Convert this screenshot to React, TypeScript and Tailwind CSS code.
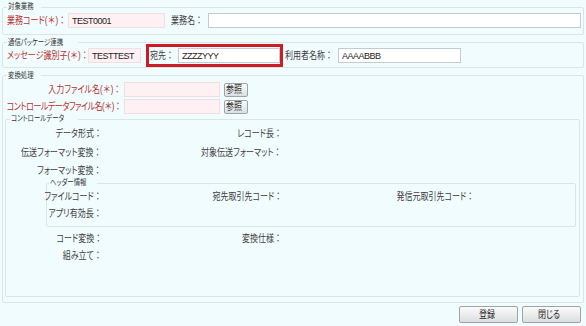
import React from 'react';

type BoxProps = {
  value?: string;
  width: string;
  required?: boolean;
};

function TextBox({ value = '', width, required = false }: BoxProps) {
  return (
    <input
      type="text"
      readOnly
      value={value}
      className={`${width} h-[15px] px-[3px] text-[9px] text-[#1e1e1e] tracking-[-0.5px] outline-none border ${
        required ? 'bg-[#fff0f3] border-[#f2dde1]' : 'bg-white border-[#c3cbcf]'
      }`}
    />
  );
}

// condensed label text, like the narrow UI font of the original screen.
// ＊ and ： keep their full width.
function Txt({ text, right = false, tight = false }: { text: string; right?: boolean; tight?: boolean }) {
  const parts = text.split(/([＊：])/);
  return (
    <span
      className={`inline-block shrink-0 whitespace-nowrap scale-x-[0.8] ${right ? 'origin-right' : 'origin-left'} ${
        tight ? 'tracking-[-0.6px]' : ''
      }`}
    >
      {parts.map((p, i) =>
        p === '＊' || p === '：' ? (
          <span key={i} className="[font-feature-settings:normal]">
            {p}
          </span>
        ) : (
          p
        )
      )}
    </span>
  );
}

function SmallButton({ label, width, height }: { label: string; width: string; height: string }) {
  return (
    <button
      type="button"
      className={`${width} ${height} flex items-center justify-center rounded-[2px] border border-[#9ea3a6] bg-gradient-to-b from-[#fbfbfb] to-[#dcdedf] text-[10px] text-[#2a2a2a] leading-none`}
    >
      <Txt text={label} />
    </button>
  );
}

function Legend({ text, className = '' }: { text: string; className?: string }) {
  return (
    <legend className={`px-[1px] text-[8px] text-[#333] ${className}`}>
      <Txt text={text} />
    </legend>
  );
}

function Cell({ text, width }: { text?: string; width: string }) {
  return <div className={`${width} flex justify-end`}>{text && <Txt text={text} right />}</div>;
}

export default function App() {
  return (
    <div className="w-[586px] h-[326px] overflow-hidden bg-[#f0fcfe] px-[2px] pt-[1px] text-[10px] text-[#404040] font-['Liberation_Sans','Noto_Sans_CJK_JP',sans-serif] [font-feature-settings:'palt']">
      {/* 対象業務 */}
      <fieldset className="border border-[#dbe4e7] rounded-[2px] pl-[4px] pr-[2px] pb-[6px]">
        <Legend text="対象業務" className="leading-[12px]" />
        <div className="flex items-center h-[15px]">
          <div className="w-[61px] text-[#b8312f]">
            <Txt text="業務コード(＊)：" />
          </div>
          <TextBox value="TEST0001" width="w-[97px]" required />
          <div className="ml-[6px] w-[37px]">
            <Txt text="業務名：" />
          </div>
          <div className="flex-1 flex">
            <TextBox width="w-full" />
          </div>
        </div>
      </fieldset>

      {/* 通信パッケージ連携 */}
      <fieldset className="mt-[2px] border border-[#dbe4e7] rounded-[2px] pl-[4px] pr-[2px] pb-[4px]">
        <Legend text="通信パッケージ連携" className="leading-[11px]" />
        <div className="flex items-center h-[15px]">
          <div className="w-[81px] text-[#b8312f]">
            <Txt text="メッセージ識別子(＊)：" />
          </div>
          <TextBox value="TESTTEST" width="w-[53px]" required />
          <div className="ml-[5px] h-[23px] w-[137px] flex items-center border-[3px] border-[#cc1c26]">
            <div className="pl-[1px] w-[29px]">
              <Txt text="宛先：" />
            </div>
            <TextBox value="ZZZZYYY" width="w-[102px]" />
          </div>
          <div className="ml-[2px] w-[53px]">
            <Txt text="利用者名称：" />
          </div>
          <TextBox value="AAAABBB" width="w-[123px]" />
        </div>
      </fieldset>

      {/* 変換処理 */}
      <fieldset className="mt-[2px] border border-[#dbe4e7] rounded-[2px] pl-[1px] pr-[3px] pb-[5px]">
        <Legend text="変換処理" className="ml-[3px] leading-[11px]" />
        <div className="mt-[1px] flex items-center h-[15px]">
          <div className="w-[117px] flex justify-end text-[#b8312f]">
            <Txt text="入力ファイル名(＊)：" right />
          </div>
          <div className="ml-[3px]">
            <TextBox width="w-[96px]" required />
          </div>
          <div className="ml-[4px]">
            <SmallButton label="参照" width="w-[24px]" height="h-[14px]" />
          </div>
        </div>
        <div className="mt-[2px] flex items-center h-[15px]">
          <div className="w-[117px] flex justify-end text-[#b8312f]">
            <Txt text="コントロールデータファイル名(＊)：" right tight />
          </div>
          <div className="ml-[3px]">
            <TextBox width="w-[96px]" required />
          </div>
          <div className="ml-[4px]">
            <SmallButton label="参照" width="w-[24px]" height="h-[14px]" />
          </div>
        </div>

        {/* コントロールデータ */}
        <fieldset className="ml-[1px] border border-[#dbe4e7] rounded-[2px] pb-[32px]">
          <Legend text="コントロールデータ" className="ml-[4px] leading-[10px]" />
          <div className="flex flex-col gap-[1px]">
            <div className="flex items-center h-[18px]">
              <Cell text="データ形式：" width="w-[96px]" />
              <Cell text="レコード長：" width="w-[180px]" />
            </div>
            <div className="flex items-center h-[18px]">
              <Cell text="伝送フォーマット変換：" width="w-[96px]" />
              <Cell text="対象伝送フォーマット：" width="w-[180px]" />
            </div>
            <div className="flex items-center h-[16px]">
              <Cell text="フォーマット変換：" width="w-[96px]" />
            </div>
          </div>

          {/* ヘッダー情報 */}
          <fieldset className="ml-[40px] mr-[3px] border border-[#dbe4e7] rounded-[2px] pb-[4px]">
            <Legend text="ヘッダー情報" className="ml-[2px] leading-[10px]" />
            <div className="flex items-center h-[17px]">
              <Cell text="ファイルコード：" width="w-[55px]" />
              <Cell text="宛先取引先コード：" width="w-[180px]" />
              <Cell text="発信元取引先コード：" width="w-[192px]" />
            </div>
            <div className="flex items-center h-[17px]">
              <Cell text="アプリ有効長：" width="w-[55px]" />
            </div>
          </fieldset>

          <div className="mt-[3px] flex items-center h-[17px]">
            <Cell text="コード変換：" width="w-[96px]" />
            <Cell text="変換仕様：" width="w-[180px]" />
          </div>
          <div className="flex items-center h-[17px]">
            <Cell text="組み立て：" width="w-[96px]" />
          </div>
        </fieldset>
      </fieldset>

      <div className="mt-[3px] flex justify-end gap-[4px] pr-[3px]">
        <SmallButton label="登録" width="w-[59px]" height="h-[17px]" />
        <SmallButton label="閉じる" width="w-[59px]" height="h-[17px]" />
      </div>
    </div>
  );
}
